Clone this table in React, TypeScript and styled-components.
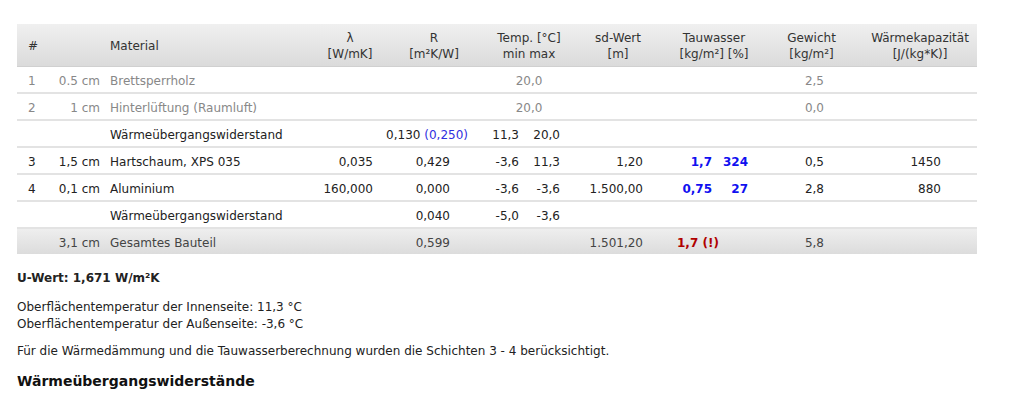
import React from 'react';
import styled, { createGlobalStyle } from 'styled-components';

const GlobalStyle = createGlobalStyle`
  body {
    margin: 0;
    background: #fff;
    font-family: "DejaVu Sans", Verdana, sans-serif;
    font-size: 12px;
    color: #222;
  }
`;

const Page = styled.div`
  padding: 24px 47px 0 17px;
`;

const Table = styled.table`
  width: 960px;
  border-collapse: collapse;
  table-layout: fixed;
`;

const HeadCell = styled.th<{ $left?: boolean; $pad?: number }>`
  padding: 6px 0 4px ${(p) => p.$pad ?? 0}px;
  line-height: 16px;
  font-weight: normal;
  color: #333;
  text-align: ${(p) => (p.$left ? 'left' : 'center')};
  background: linear-gradient(#f0f0f0, #dbdbdb);
  border-bottom: 1px solid #d0d0d0;
`;

type Tone = 'normal' | 'muted' | 'total';

const Row = styled.tr<{ $tone?: Tone }>`
  color: ${(p) => (p.$tone === 'muted' ? '#888' : p.$tone === 'total' ? '#444' : '#222')};
  background: ${(p) => (p.$tone === 'total' ? 'linear-gradient(#efefef, #dcdcdc)' : '#fff')};
  td {
    border-bottom: ${(p) => (p.$tone === 'total' ? '0' : '2px solid #e3e3e3')};
  }
`;

const Cell = styled.td<{ $align?: 'left' | 'right' | 'center'; $pl?: number; $pr?: number }>`
  padding: 7px ${(p) => p.$pr ?? 0}px 3px ${(p) => p.$pl ?? 0}px;
  line-height: 15px;
  white-space: nowrap;
  text-align: ${(p) => p.$align ?? 'right'};
`;

const Pair = styled.div<{ $cols: string }>`
  display: grid;
  grid-template-columns: ${(p) => p.$cols};
  text-align: right;
`;

const Blue = styled.span<{ $bold?: boolean }>`
  color: ${(p) => (p.$bold ? '#1010f0' : '#3030e0')};
  font-weight: ${(p) => (p.$bold ? 'bold' : 'normal')};
`;

const Warn = styled.span`
  color: #b00000;
  font-weight: bold;
`;

const Note = styled.p<{ $bold?: boolean; $top?: number }>`
  margin: ${(p) => p.$top ?? 11}px 0 11px;
  line-height: 1.4;
  font-weight: ${(p) => (p.$bold ? 'bold' : 'normal')};
`;

const Heading = styled.h3`
  margin: 12px 0 0;
  font-size: 14px;
  line-height: 1.4;
  font-weight: bold;
  color: #111;
`;

// column edges: 17 | 45 | 105 | 322 | 378 | 490 | 568 | 668 | 760 | 863 | 977
const widths = [28, 60, 217, 56, 112, 78, 100, 92, 103, 114];

const Temp = ({ min, max }: { min: string; max: string }) => (
  <Pair $cols="29px 41px">
    <span>{min}</span>
    <span>{max}</span>
  </Pair>
);

const Tau = ({ kg, pct }: { kg: string; pct: string }) => (
  <Pair $cols="44px 36px">
    <Blue $bold>{kg}</Blue>
    <Blue $bold>{pct}</Blue>
  </Pair>
);

export default function App() {
  return (
    <>
      <GlobalStyle />
      <Page>
        <Table>
          <colgroup>
            {widths.map((w, i) => (
              <col key={i} style={{ width: w }} />
            ))}
          </colgroup>
          <thead>
            <tr>
              <HeadCell $left $pad={11}>#</HeadCell>
              <HeadCell />
              <HeadCell $left $pad={5}>Material</HeadCell>
              <HeadCell>λ<br />[W/mK]</HeadCell>
              <HeadCell>R<br />[m²K/W]</HeadCell>
              <HeadCell>Temp. [°C]<br />min max</HeadCell>
              <HeadCell>sd-Wert<br />[m]</HeadCell>
              <HeadCell>Tauwasser<br />[kg/m²] [%]</HeadCell>
              <HeadCell>Gewicht<br />[kg/m²]</HeadCell>
              <HeadCell>Wärmekapazität<br />[J/(kg*K)]</HeadCell>
            </tr>
          </thead>
          <tbody>
            <Row $tone="muted">
              <Cell $align="left" $pl={11}>1</Cell>
              <Cell $pr={5}>0.5 cm</Cell>
              <Cell $align="left" $pl={5}>Brettsperrholz</Cell>
              <Cell />
              <Cell />
              <Cell $align="center">20,0</Cell>
              <Cell />
              <Cell />
              <Cell $pr={39}>2,5</Cell>
              <Cell />
            </Row>
            <Row $tone="muted">
              <Cell $align="left" $pl={11}>2</Cell>
              <Cell $pr={5}>1 cm</Cell>
              <Cell $align="left" $pl={5}>Hinterlüftung (Raumluft)</Cell>
              <Cell />
              <Cell />
              <Cell $align="center">20,0</Cell>
              <Cell />
              <Cell />
              <Cell $pr={39}>0,0</Cell>
              <Cell />
            </Row>
            <Row>
              <Cell />
              <Cell />
              <Cell $align="left" $pl={5}>Wärmeübergangswiderstand</Cell>
              <Cell />
              <Cell $pr={22}>0,130 <Blue>(0,250)</Blue></Cell>
              <Cell><Temp min="11,3" max="20,0" /></Cell>
              <Cell />
              <Cell />
              <Cell />
              <Cell />
            </Row>
            <Row>
              <Cell $align="left" $pl={11}>3</Cell>
              <Cell $pr={5}>1,5 cm</Cell>
              <Cell $align="left" $pl={5}>Hartschaum, XPS 035</Cell>
              <Cell $pr={5}>0,035</Cell>
              <Cell $pr={40}>0,429</Cell>
              <Cell><Temp min="-3,6" max="11,3" /></Cell>
              <Cell $pr={25}>1,20</Cell>
              <Cell><Tau kg="1,7" pct="324" /></Cell>
              <Cell $pr={39}>0,5</Cell>
              <Cell $pr={36}>1450</Cell>
            </Row>
            <Row>
              <Cell $align="left" $pl={11}>4</Cell>
              <Cell $pr={5}>0,1 cm</Cell>
              <Cell $align="left" $pl={5}>Aluminium</Cell>
              <Cell $pr={5}>160,000</Cell>
              <Cell $pr={40}>0,000</Cell>
              <Cell><Temp min="-3,6" max="-3,6" /></Cell>
              <Cell $pr={25}>1.500,00</Cell>
              <Cell><Tau kg="0,75" pct="27" /></Cell>
              <Cell $pr={39}>2,8</Cell>
              <Cell $pr={36}>880</Cell>
            </Row>
            <Row>
              <Cell />
              <Cell />
              <Cell $align="left" $pl={5}>Wärmeübergangswiderstand</Cell>
              <Cell />
              <Cell $pr={40}>0,040</Cell>
              <Cell><Temp min="-5,0" max="-3,6" /></Cell>
              <Cell />
              <Cell />
              <Cell />
              <Cell />
            </Row>
            <Row $tone="total">
              <Cell />
              <Cell $pr={5}>3,1 cm</Cell>
              <Cell $align="left" $pl={5}>Gesamtes Bauteil</Cell>
              <Cell />
              <Cell $pr={40}>0,599</Cell>
              <Cell />
              <Cell $pr={25}>1.501,20</Cell>
              <Cell $align="left" $pl={9}><Warn>1,7 (!)</Warn></Cell>
              <Cell $pr={39}>5,8</Cell>
              <Cell />
            </Row>
          </tbody>
        </Table>

        <Note $bold $top={16}>U-Wert: 1,671 W/m²K</Note>
        <Note $top={12}>
          Oberflächentemperatur der Innenseite: 11,3 °C
          <br />
          Oberflächentemperatur der Außenseite: -3,6 °C
        </Note>
        <Note>Für die Wärmedämmung und die Tauwasserberechnung wurden die Schichten 3 - 4 berücksichtigt.</Note>
        <Heading>Wärmeübergangswiderstände</Heading>
      </Page>
    </>
  );
}
